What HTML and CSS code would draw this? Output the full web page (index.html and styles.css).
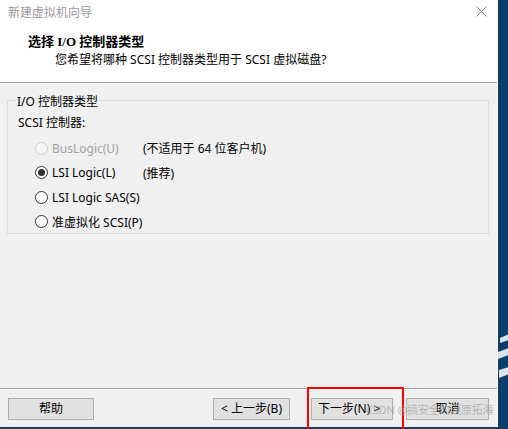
FILE: index.html
```html
<!DOCTYPE html>
<html lang="zh-CN">
<head>
<meta charset="utf-8">
<title>新建虚拟机向导</title>
<link rel="stylesheet" href="styles.css">
</head>
<body>
<div class="screen">
  <div class="dialog">
    <div class="header">
      <div class="titlebar">
        <span class="title">新建虚拟机向导</span>
        <svg class="close" width="11" height="11" viewBox="0 0 11 11"><path d="M0.5 0.5L10.5 10.5M10.5 0.5L0.5 10.5" stroke="#8a8a8a" stroke-width="1"/></svg>
      </div>
      <div class="heading">选择 I/O 控制器类型</div>
      <div class="subheading">您希望将哪种 SCSI 控制器类型用于 SCSI 虚拟磁盘?</div>
    </div>
    <div class="sep"></div>
    <div class="body">
      <div class="group">
        <span class="legend">I/O 控制器类型</span>
        <div class="grouplabel">SCSI 控制器:</div>
        <div class="row disabled">
          <span class="opt"><span class="radio"></span>BusLogic(U)</span>
          <span class="note">(不适用于 64 位客户机)</span>
        </div>
        <div class="row">
          <span class="opt"><span class="radio checked"></span>LSI Logic(L)</span>
          <span class="note">(推荐)</span>
        </div>
        <div class="row">
          <span class="opt"><span class="radio"></span>LSI Logic SAS(S)</span>
        </div>
        <div class="row">
          <span class="opt"><span class="radio"></span>准虚拟化 SCSI(P)</span>
        </div>
      </div>
    </div>
    <div class="sep"></div>
    <div class="footer">
      <button class="btn help">帮助</button>
      <div class="navbtns">
        <button class="btn back">&lt; 上一步(B)</button>
        <button class="btn next">下一步(N) &gt;</button>
        <button class="btn cancel">取消</button>
      </div>
    </div>
  </div>
  <div class="strip">
    <svg class="stripes" width="11" height="50" viewBox="0 0 11 50"><path d="M2 4L11 0V6L2 9Z M0 18L11 14V21L0 25Z M1 36L11 33V40L1 44Z" fill="#ffffff" opacity="0.85"/></svg>
  </div>
  <div class="highlight"></div>
  <div class="watermark">CSDN @搞安全的漠原拓海</div>
</div>
</body>
</html>
```
FILE: styles.css
```css
html, body {
  margin: 0;
  padding: 0;
}
body {
  width: 508px;
  height: 429px;
  overflow: hidden;
  font-family: "Noto Sans", "Noto Sans CJK SC", sans-serif;
  font-size: 12px;
  color: #000;
  background: #0b3e6b;
}
.screen {
  position: relative;
  display: flex;
  width: 508px;
  height: 429px;
  border-bottom: 2px solid #1d3b5a;
  box-sizing: border-box;
}
.dialog {
  width: 497px;
  display: flex;
  flex-direction: column;
  background: #f0f0f0;
}
.header {
  background: #fff;
  height: 82px;
  box-sizing: border-box;
}
.titlebar {
  height: 24px;
  display: flex;
  align-items: center;
  justify-content: space-between;
  padding: 0 10px 0 8px;
}
.title {
  color: #9a9a9a;
  font-family: "Noto Sans CJK SC", sans-serif;
  font-size: 12px;
  line-height: 18px;
}
.close {
  margin-top: -2px;
}
.heading {
  margin-top: 9px;
  padding-left: 28px;
  font-family: "Liberation Serif", "Noto Sans CJK SC", serif;
  font-weight: bold;
  font-size: 13px;
  line-height: 18px;
}
.subheading {
  padding-left: 55px;
  font-size: 12px;
  line-height: 18px;
}
.sep {
  height: 1px;
  background: #a0a0a0;
  border-bottom: 1px solid #fbfbfb;
}
.body {
  flex: 1;
  padding: 16px 8px 0 7px;
}
.group {
  border: 1px solid #dcdcdc;
  padding: 0 0 0 10px;
  height: 134px;
  box-sizing: border-box;
}
.legend {
  display: block;
  width: fit-content;
  margin: -7px 0 0 -2px;
  padding: 0 2px 0 1px;
  background: #f0f0f0;
  line-height: 16px;
}
.grouplabel {
  margin-top: 4px;
  line-height: 18px;
}
.row {
  display: flex;
  align-items: center;
  height: 24.5px;
  margin-left: 17px;
}
.grouplabel + .row {
  margin-top: 4px;
}
.opt {
  display: flex;
  align-items: center;
  width: 108px;
  white-space: nowrap;
}
.radio {
  width: 13px;
  height: 13px;
  box-sizing: border-box;
  border: 1px solid #333;
  border-radius: 50%;
  background: #fff;
  margin-right: 4px;
  display: flex;
  align-items: center;
  justify-content: center;
  flex: none;
}
.radio.checked::after {
  content: "";
  width: 7px;
  height: 7px;
  border-radius: 50%;
  background: #333;
}
.disabled .opt {
  color: #a0a0a0;
}
.disabled .radio {
  border-color: #cccccc;
  background: #f6f6f6;
}
.note {
  white-space: nowrap;
}
.footer {
  height: 37px;
  display: flex;
  justify-content: space-between;
  padding: 8px 8px 0 8px;
  box-sizing: border-box;
}
.navbtns {
  display: flex;
}
.btn {
  height: 22px;
  box-sizing: border-box;
  border: 1px solid #adadad;
  background: #e1e1e1;
  font-family: "Noto Sans", "Noto Sans CJK SC", sans-serif;
  font-size: 12px;
  color: #000;
  padding: 0;
  line-height: 18px;
}
.help { width: 86px; }
.back { width: 77px; }
.next { width: 82px; margin-left: 21px; text-align: left; padding-left: 6px; }
.cancel { width: 83px; margin-left: 13px; }
.strip {
  flex: 1;
  background: #0b3e6b;
  position: relative;
  border-left: 1px solid #fff;
}
.stripes {
  position: absolute;
  left: 0;
  top: 334px;
}
.highlight {
  position: absolute;
  left: 307px;
  top: 387px;
  width: 97px;
  height: 50px;
  box-sizing: border-box;
  border: 2px solid #f00;
  border-bottom: none;
}
.watermark {
  position: absolute;
  left: 366px;
  top: 402px;
  font-size: 11px;
  line-height: 16px;
  letter-spacing: -0.2px;
  color: rgba(165, 165, 165, 0.75);
  white-space: nowrap;
}
```
